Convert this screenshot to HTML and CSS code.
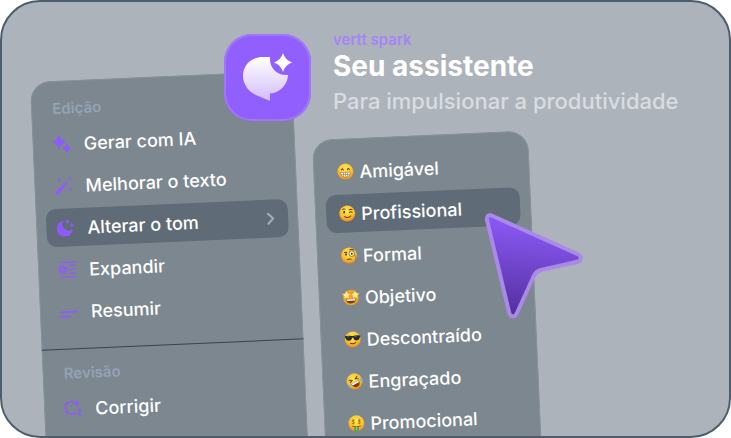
FILE: index.html
```html
<!DOCTYPE html>
<html lang="pt-BR">

<head>
    <meta charset="UTF-8">
    <meta name="viewport" content="width=device-width, initial-scale=1.0">
    <title>vertt spark</title>
    <link rel="stylesheet" href="styles.css">
</head>

<body>
    <main class="card">
        <header class="hero">
            <div class="logo">
                <svg viewBox="0 0 87 87" aria-hidden="true">
                    <defs>
                        <linearGradient id="logoFill" x1="0" y1="0" x2="0" y2="1">
                            <stop offset="0" stop-color="#fff" />
                            <stop offset="1" stop-color="#d3bcfd" />
                        </linearGradient>
                    </defs>
                    <path fill="url(#logoFill)" d="M46 23H39C27 23 19 31 19 42C19 51 25 58 33 61.500L46 67V59.500C56 59 63.500 51 64 41C54 42 45 35 46 23Z" />
                    <path fill="#fff" d="M59 19Q61 26 68 28.500Q61 31 59 38Q57 31 50 28.500Q57 26 59 19Z" />
                </svg>
            </div>
            <div class="hero-text">
                <p class="brand">vertt spark</p>
                <h1>Seu assistente</h1>
                <p class="subtitle">Para impulsionar a produtividade</p>
            </div>
        </header>

        <div class="panels">
            <nav class="panel panel-actions">
                <section class="group">
                    <h2>Edição</h2>
                    <button type="button" class="item">
                        <svg class="icon" viewBox="0 0 18 18"><path d="M6.500 1Q7.800 6 13 7.300Q7.800 8.600 6.500 13.500Q5.200 8.600 0 7.300Q5.200 6 6.500 1Z" stroke="#9059ff" /><path d="M14 10.500Q14.700 13 17.500 14Q14.700 15 14 17.500Q13.300 15 10.500 14Q13.300 13 14 10.500Z" stroke="#9059ff" /></svg>
                        Gerar com IA
                    </button>
                    <button type="button" class="item">
                        <svg class="icon" viewBox="0 0 18 18"><path d="M1 15L8.500 7.500L11 10L3.500 17.300Q2.200 18 1.200 17Q.3 16 1 15Z" /><path d="M9.300 6.700L10.600 5.400Q11.800 4.500 12.900 5.600Q13.900 6.700 13 7.900L11.700 9.200Z" opacity=".7" /><path d="M5 1L5.700 2.300L7 3L5.700 3.700L5 5L4.300 3.700L3 3L4.300 2.300ZM15.500 0L16.200 1.300L17.500 2L16.200 2.700L15.500 4L14.800 2.700L13.500 2L14.800 1.300ZM15.500 11L16.200 12.300L17.500 13L16.200 13.700L15.500 15L14.800 13.700L13.500 13L14.800 12.300Z" /></svg>
                        Melhorar o texto
                    </button>
                    <button type="button" class="item selected">
                        <svg class="icon" viewBox="0 0 18 18"><path d="M7.300 2A8 8 0 1 0 16.300 11A6.500 6.500 0 0 1 7.300 2Z" /><path d="M11.500 0L12.300 2.200L14.500 3L12.300 3.800L11.500 6L10.700 3.800L8.500 3L10.700 2.200ZM15.500 4.500L16.200 6.300L18 7L16.200 7.700L15.500 9.500L14.800 7.700L13 7L14.800 6.300Z" /></svg>
                        Alterar o tom
                        <svg class="chevron" viewBox="0 0 10 16"><path d="M2 3L7 8L2 13" /></svg>
                    </button>
                    <button type="button" class="item">
                        <svg class="icon" viewBox="0 0 18 18"><path fill="none" stroke="#9059ff" stroke-width="1.300" stroke-linecap="round" d="M3 1.500H17M11 5H17M11 9H17M11 13H17M3 16.500H17" /><path fill-rule="evenodd" d="M4.500 4.500A4.300 4.300 0 1 1 4.400 4.500ZM3.900 6.200V8.300H1.900V9.400H3.900V11.500H5V9.400H7V8.300H5V6.200Z" /></svg>
                        Expandir
                    </button>
                    <button type="button" class="item">
                        <svg class="icon" viewBox="0 0 18 18"><path fill="none" stroke="#9059ff" stroke-width="1.800" stroke-linecap="round" d="M1 9.500H17M1 14H10" /></svg>
                        Resumir
                    </button>
                </section>
                <section class="group">
                    <h2>Revisão</h2>
                    <button type="button" class="item">
                        <svg class="icon" viewBox="0 0 18 18"><path fill="none" stroke="#9059ff" stroke-width="1.700" stroke-linecap="round" d="M9 2.300A6.200 6.200 0 1 0 10.500 13.500M13.500 13.500L16 17" /><path d="M12.500 0L13.500 3L16.500 4L13.500 5L12.500 8L11.500 5L8.500 4L11.500 3ZM15.500 8L16.200 10.300L18 11L16.200 11.700L15.500 14L14.500 11.700L11.500 11L14.500 10.300Z" /></svg>
                        Corrigir
                    </button>
                </section>
            </nav>

            <nav class="panel panel-tones">
                <svg class="defs" aria-hidden="true">
                    <defs>
                        <radialGradient id="face" cx=".5" cy=".35" r=".65">
                            <stop offset="0" stop-color="#ffe95c" />
                            <stop offset=".6" stop-color="#fdc52f" />
                            <stop offset="1" stop-color="#ee8b17" />
                        </radialGradient>
                    </defs>
                </svg>
                <button type="button" class="item">
                    <svg class="emoji" viewBox="0 0 16 16"><circle cx="8" cy="8" r="8" fill="url(#face)" /><path fill="none" stroke="#6b3a10" stroke-linecap="round" d="M4 6.300Q5 4 6 6.300M10 6.300Q11 4 12 6.300" /><path fill="#fff" stroke="#8a5a20" stroke-width=".5" d="M3 8.800H13Q12.500 13.500 8 13.500Q3.500 13.500 3 8.800ZM3.500 11H12.500M6 9V13M8 9V13.500M10 9V13" /></svg>
                    Amigável
                </button>
                <button type="button" class="item selected">
                    <svg class="emoji" viewBox="0 0 16 16"><circle cx="8" cy="8" r="8" fill="url(#face)" /><ellipse cx="5" cy="6.500" rx="1" ry="1.400" fill="#5d3510" /><path fill="none" stroke="#6b3a10" stroke-linecap="round" d="M3.500 3.800Q4.500 2.800 6 3.500M10 4.500Q11.500 3.200 13 4.200M10 7.300Q11.500 5.800 13 7M5 11Q8 13.300 11.500 10.500" /></svg>
                    Profissional
                </button>
                <button type="button" class="item">
                    <svg class="emoji" viewBox="0 0 16 16"><circle cx="8" cy="8" r="8" fill="url(#face)" /><circle cx="10.800" cy="6.300" r="2.800" fill="#fff3b0" stroke="#77736a" stroke-width=".9" /><circle cx="10.800" cy="6.300" r="1" fill="#5d3510" /><ellipse cx="5" cy="6.800" rx="1" ry="1.200" fill="#5d3510" /><path fill="none" stroke="#6b3a10" stroke-linecap="round" d="M3.500 4.800L6 4.600M9 2.500Q11 1.300 13 2.800M6 12Q8 11 10 11.800" /><path fill="none" stroke="#77736a" stroke-width=".7" d="M13.500 7Q15.500 10 14.500 15" /></svg>
                    Formal
                </button>
                <button type="button" class="item">
                    <svg class="emoji" viewBox="0 0 16 16"><circle cx="8" cy="8" r="7.800" fill="#f3a426" /><path fill="#7b3c0c" d="M3 9.800H13Q12.500 14 8 14Q3.500 14 3 9.800Z" /><path fill="#fff" d="M3.500 9.800H12.500L12 11.300H4Z" /><path fill="#ffee9c" stroke="#d98212" stroke-width=".4" d="M3.800 1L5.200 3.800L8 4.200L6 6.300L6.500 9.300L3.800 8L1 9.300L1.500 6.300L-.8 4.200L2.400 3.800ZM12.200 1L13.600 3.800L16.800 4.200L14.500 6.300L15 9.300L12.200 8L9.500 9.300L10 6.300L8 4.200L10.800 3.800Z" /></svg>
                    Objetivo
                </button>
                <button type="button" class="item">
                    <svg class="emoji" viewBox="0 0 16 16"><circle cx="8" cy="8" r="8" fill="url(#face)" /><path fill="#252b30" d="M.3 4.500Q4 3.700 8 4.700Q12 3.700 15.700 4.500V6L15 6.500Q14.500 9.200 11.800 9.200Q9.200 9.200 8.600 6.300H7.400Q6.800 9.200 4.200 9.200Q1.500 9.200 1 6.500L.3 6Z" /><path fill="none" stroke="#7d8588" stroke-width=".7" d="M2.500 5.500L4.500 5.200M10 5.500L12 5.200" /><path fill="none" stroke="#6b3a10" stroke-linecap="round" d="M5.500 11.800Q8.500 13 11 11" /></svg>
                    Descontraído
                </button>
                <button type="button" class="item">
                    <svg class="emoji" viewBox="0 0 16 16"><g transform="rotate(-25 8 8)"><circle cx="8" cy="8" r="8" fill="url(#face)" /><path fill="#7b3c0c" d="M3.500 9H12.500Q12 14 8 14Q4 14 3.500 9Z" /><path fill="#fff" d="M4 9H12L11.500 10.700H4.500Z" /><path fill="none" stroke="#6b3a10" stroke-linecap="round" d="M3.500 4.500L6.200 6L3.500 7.300M12.500 4.500L9.800 6L12.500 7.300" /><path fill="#55b9ef" d="M3 8.500Q-1 8.500 0 11Q1.500 12.500 3 8.500ZM13 8.500Q17 8.500 16 11Q14.500 12.500 13 8.500Z" /></g></svg>
                    Engraçado
                </button>
                <button type="button" class="item">
                    <svg class="emoji" viewBox="0 0 16 16"><circle cx="8" cy="8" r="8" fill="url(#face)" /><path fill="none" stroke="#a8741a" stroke-width=".8" d="M6.300 5Q3.500 4 3.700 5.700Q6.500 6.500 6 7.700Q5 8.800 3.400 7.800M5 3.500V9M12.400 5Q9.600 4 9.800 5.700Q12.600 6.500 12.100 7.700Q11.100 8.800 9.500 7.800M11 3.500V9" /><path fill="none" stroke="#7b3c0c" stroke-width=".8" stroke-linecap="round" d="M4 10.800Q8 12.500 12 10.800" /><path fill="#43a047" d="M5.700 11.700H10.300V15Q8 17 5.700 15Z" /><path fill="#91d18b" d="M7.300 12.200H8.700V15H7.300Z" /></svg>
                    Promocional
                </button>
            </nav>
        </div>

        <svg class="cursor" viewBox="0 0 104 112" aria-hidden="true">
            <defs>
                <linearGradient id="cursorFill" x1=".4" y1="0" x2=".3" y2="1">
                    <stop offset=".1" stop-color="#8857f2" />
                    <stop offset="1" stop-color="#532f9c" />
                </linearGradient>
            </defs>
            <path fill="url(#cursorFill)" stroke="#a98ae6" stroke-width="4" stroke-linejoin="round" d="M9.500 5.500L96.500 44.500Q101 48 96.500 51.500L59 60Q54.500 61 52 65.500L34.500 104Q31 109 27.500 104L5 10Q4.500 4 9.500 5.500Z" />
        </svg>
    </main>
</body>

</html>
```
FILE: styles.css
```css
* {
    box-sizing: border-box;
}

body {
    margin: 0;
    background-color: #fff;
    font-family: Inter, "Liberation Sans", sans-serif;
}

h1,
h2,
p {
    margin: 0;
}

.card {
    position: relative;
    height: 100vh;
    overflow: hidden;
    border: 2px solid #4e5d6c;
    border-radius: 40px;
    background-color: #adb3bb;
}

/* Title block sits over the corner of the first panel */
.hero {
    position: absolute;
    z-index: 1;
    top: 32px;
    left: 222px;
    display: flex;
    gap: 22px;
}

.logo {
    width: 87px;
    height: 87px;
    border-radius: 28px;
    background-color: #925fff;
    box-shadow: inset 0 0 0 2px #a177f9;
}

.logo svg {
    display: block;
}

.hero-text {
    display: flex;
    flex-direction: column;
    white-space: nowrap;
}

.brand {
    font-size: 15px;
    font-weight: 600;
    line-height: 12px;
    color: #a585f5;
}

.hero-text h1 {
    font-size: 28px;
    font-weight: 700;
    line-height: 40px;
    color: #fff;
}

.subtitle {
    font-size: 22px;
    font-weight: 500;
    line-height: 30px;
    color: #d9dce0;
}

.panels {
    display: flex;
    align-items: flex-start;
    gap: 20px;
    padding: 80px 0 0 28px;
}

.panel {
    flex: none;
    border-radius: 20px;
    background-color: #7c8790;
    box-shadow: inset 0 0 0 1px #87919b;
    transform: rotate(-2.5deg);
    transform-origin: top left;
}

.panel-actions {
    width: 262px;
}

.panel-tones {
    display: flex;
    flex-direction: column;
    gap: 4px;
    width: 216px;
    margin-top: 58px;
    padding: 14px 11px 40px;
}

.group {
    display: flex;
    flex-direction: column;
    gap: 4px;
    padding: 18px 10px;
}

.group + .group {
    border-top: 1px solid #364452;
    padding: 14px 10px 40px;
}

.group h2 {
    padding: 0 11px 2px;
    font-size: 15px;
    font-weight: 600;
    line-height: 20px;
    color: #94a3b5;
}

.item {
    display: flex;
    align-items: center;
    gap: 13px;
    height: 38px;
    padding: 0 12px 0 10px;
    border: none;
    border-radius: 10px;
    background: none;
    color: #fff;
    font-family: inherit;
    font-size: 18px;
    font-weight: 500;
    text-align: left;
    white-space: nowrap;
    cursor: pointer;
}

.item.selected {
    background-color: #5f6c78;
}

.panel-tones .item {
    gap: 6px;
    padding-left: 13px;
}

.icon {
    flex: none;
    width: 18px;
    height: 18px;
    fill: #9059ff;
}

.chevron {
    width: 10px;
    height: 16px;
    margin-left: auto;
    fill: none;
    stroke: #a5adb6;
    stroke-width: 2;
    stroke-linecap: round;
    stroke-linejoin: round;
}

.emoji {
    flex: none;
    width: 16px;
    height: 16px;
    overflow: visible;
}

.defs {
    position: absolute;
    width: 0;
    height: 0;
}

.cursor {
    position: absolute;
    z-index: 2;
    top: 208px;
    left: 480px;
    width: 104px;
    height: 112px;
}
```
